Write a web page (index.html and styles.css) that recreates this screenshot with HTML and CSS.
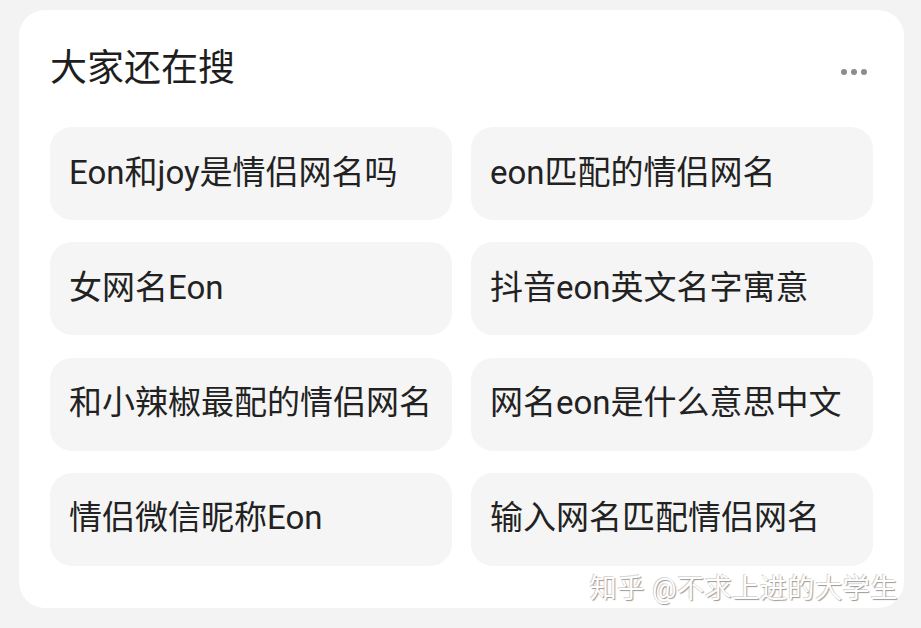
FILE: index.html
```html
<!DOCTYPE html>
<html lang="zh-CN">
<head>
<meta charset="utf-8">
<title>大家还在搜</title>
<link rel="stylesheet" href="styles.css">
</head>
<body>
<section class="card">
  <header class="card-head">
    <h2 class="card-title">大家还在搜</h2>
    <span class="more" aria-label="更多"><i></i><i></i><i></i></span>
  </header>
  <div class="tags">
    <a class="tag">Eon和joy是情侣网名吗</a>
    <a class="tag">eon匹配的情侣网名</a>
    <a class="tag">女网名Eon</a>
    <a class="tag">抖音eon英文名字寓意</a>
    <a class="tag">和小辣椒最配的情侣网名</a>
    <a class="tag">网名eon是什么意思中文</a>
    <a class="tag">情侣微信昵称Eon</a>
    <a class="tag">输入网名匹配情侣网名</a>
  </div>
  <div class="watermark">知乎 @不求上进的大学生</div>
</section>
</body>
</html>
```

FILE: styles.css
```css
html, body {
  margin: 0;
  padding: 0;
}

body {
  width: 921px;
  height: 628px;
  background: #f3f3f3;
  font-family: Roboto, "Noto Sans CJK SC", sans-serif;
  overflow: hidden;
}

.card {
  position: relative;
  box-sizing: border-box;
  margin: 10px 0 0 19px;
  width: 885px;
  height: 598px;
  padding: 30px 31px 0;
  background: #fff;
  border-radius: 26px;
}

.card-head {
  display: flex;
  align-items: center;
  justify-content: space-between;
  height: 56px;
}

.card-title {
  margin: 0;
  font-size: 37px;
  font-weight: 400;
  color: #1e1e1e;
  line-height: 1;
}

.more {
  display: flex;
  gap: 4px;
  margin: 8px 6px 0 0;
}

.more i {
  width: 6px;
  height: 6px;
  border-radius: 50%;
  background: #8c8c8c;
}

.tags {
  display: grid;
  grid-template-columns: 402px 402px;
  column-gap: 19px;
  row-gap: 22.33px;
  margin-top: 31px;
}

.tag {
  box-sizing: border-box;
  display: flex;
  align-items: center;
  height: 93px;
  padding: 0 0 8px 19px;
  background: #f5f5f5;
  border-radius: 22px;
  font-size: 33px;
  color: #222;
  white-space: nowrap;
}

.watermark {
  position: absolute;
  right: 6px;
  bottom: 2px;
  font-size: 27px;
  color: #fff;
  letter-spacing: 0.6px;
  text-shadow: 1px 1px 1px #9a9a9a, -1px -1px 0 #d8d8d8;
}
```
